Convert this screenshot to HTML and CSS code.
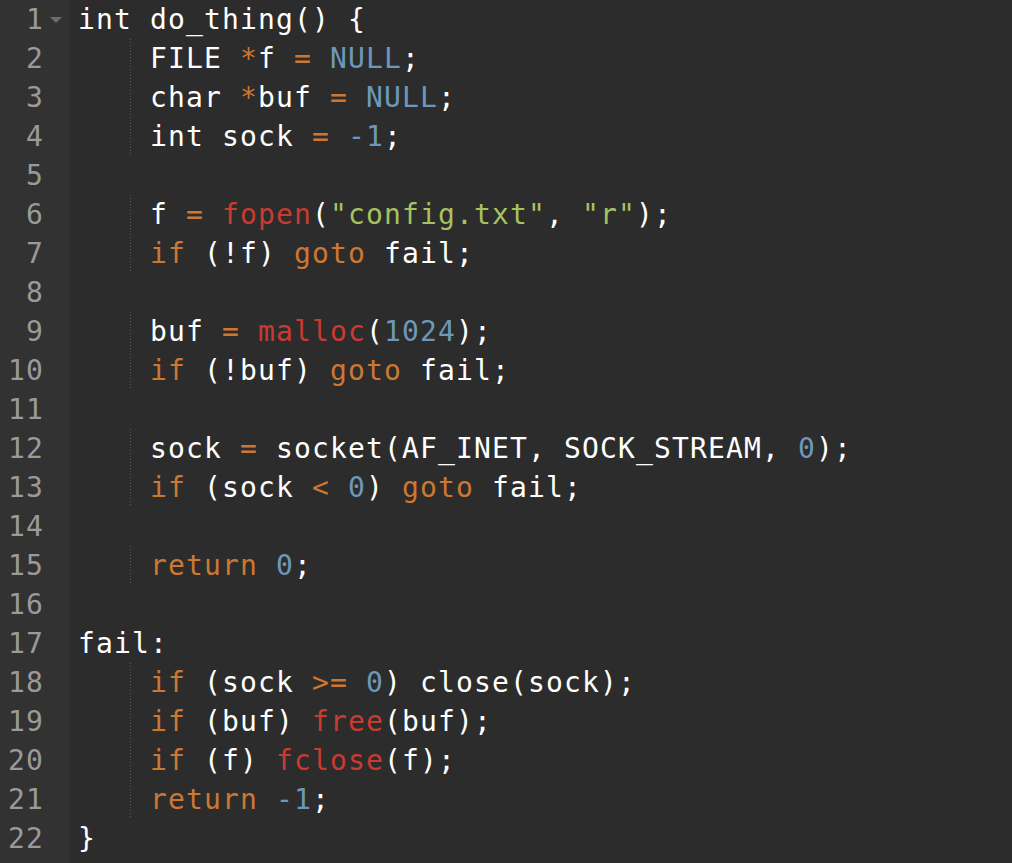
FILE: index.html
```html
<!DOCTYPE html>
<html>
<head>
<meta charset="utf-8">
<link rel="stylesheet" href="styles.css">
</head>
<body>
<div class="editor">
  <div class="gutter">
    <div class="ln">1<span class="fold"></span></div>
    <div class="ln">2</div>
    <div class="ln">3</div>
    <div class="ln">4</div>
    <div class="ln">5</div>
    <div class="ln">6</div>
    <div class="ln">7</div>
    <div class="ln">8</div>
    <div class="ln">9</div>
    <div class="ln">10</div>
    <div class="ln">11</div>
    <div class="ln">12</div>
    <div class="ln">13</div>
    <div class="ln">14</div>
    <div class="ln">15</div>
    <div class="ln">16</div>
    <div class="ln">17</div>
    <div class="ln">18</div>
    <div class="ln">19</div>
    <div class="ln">20</div>
    <div class="ln">21</div>
    <div class="ln">22</div>
  </div>
  <div class="code">
    <div class="line">int do_thing() {</div>
    <div class="line ind">    FILE <span class="op">*</span>f <span class="op">=</span> <span class="num">NULL</span>;</div>
    <div class="line ind">    char <span class="op">*</span>buf <span class="op">=</span> <span class="num">NULL</span>;</div>
    <div class="line ind">    int sock <span class="op">=</span> <span class="num">-1</span>;</div>
    <div class="line"> </div>
    <div class="line ind">    f <span class="op">=</span> <span class="fn">fopen</span>(<span class="str">"config.txt"</span>, <span class="str">"r"</span>);</div>
    <div class="line ind">    <span class="kw">if</span> (!f) <span class="kw">goto</span> fail;</div>
    <div class="line"> </div>
    <div class="line ind">    buf <span class="op">=</span> <span class="fn">malloc</span>(<span class="num">1024</span>);</div>
    <div class="line ind">    <span class="kw">if</span> (!buf) <span class="kw">goto</span> fail;</div>
    <div class="line"> </div>
    <div class="line ind">    sock <span class="op">=</span> socket(AF_INET, SOCK_STREAM, <span class="num">0</span>);</div>
    <div class="line ind">    <span class="kw">if</span> (sock <span class="op">&lt;</span> <span class="num">0</span>) <span class="kw">goto</span> fail;</div>
    <div class="line"> </div>
    <div class="line ind">    <span class="kw">return</span> <span class="num">0</span>;</div>
    <div class="line"> </div>
    <div class="line">fail:</div>
    <div class="line ind">    <span class="kw">if</span> (sock <span class="op">&gt;=</span> <span class="num">0</span>) close(sock);</div>
    <div class="line ind">    <span class="kw">if</span> (buf) <span class="fn">free</span>(buf);</div>
    <div class="line ind">    <span class="kw">if</span> (f) <span class="fn">fclose</span>(f);</div>
    <div class="line ind">    <span class="kw">return</span> <span class="num">-1</span>;</div>
    <div class="line">}</div>
  </div>
</div>
</body>
</html>
```
FILE: styles.css
```css
html, body {
  margin: 0;
  padding: 0;
  background: #2c2c2c;
}
body {
  width: 1012px;
  height: 863px;
  overflow: hidden;
}
.editor {
  display: flex;
  height: 863px;
  font-family: "DejaVu Sans Mono", monospace;
  font-size: 28px;
  letter-spacing: 1.14px;
  line-height: 39px;
}
.gutter {
  width: 70px;
  flex: none;
  background: #323232;
  color: #9a9a9a;
}
.ln {
  position: relative;
  text-align: right;
  padding-right: 26px;
}
.fold {
  position: absolute;
  left: 50px;
  top: 17px;
  width: 0;
  height: 0;
  border-left: 6px solid transparent;
  border-right: 6px solid transparent;
  border-top: 6px solid #6a6a6a;
}
.code {
  flex: 1;
  padding-left: 8px;
  color: #ffffff;
}
.line {
  height: 39px;
  white-space: pre;
}
.ind {
  background-image: repeating-linear-gradient(to bottom, #5a5a5a 0 1px, transparent 1px 3px);
  background-size: 1px 100%;
  background-position: 52px 0;
  background-repeat: no-repeat;
}
.kw { color: #cc7833; }
.op { color: #cc7833; }
.num { color: #6c99bb; }
.str { color: #a5c261; }
.fn { color: #c93b30; }
```
